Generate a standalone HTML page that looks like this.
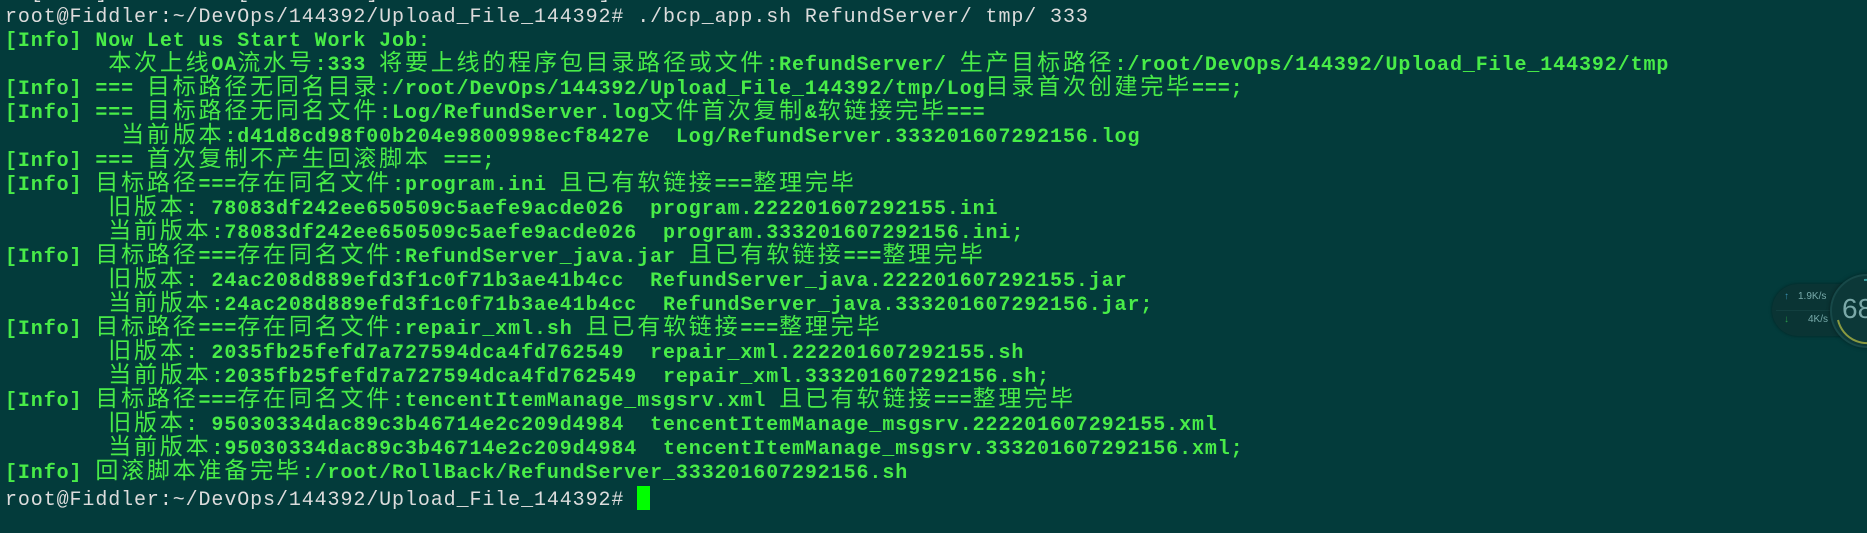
<!DOCTYPE html>
<html><head><meta charset="utf-8"><style>
html,body{margin:0;padding:0;width:1867px;height:533px;overflow:hidden;background:#033b3b;}
pre{position:absolute;left:5px;top:-18px;margin:0;font-family:"Liberation Mono","Noto Sans CJK SC",monospace;font-size:20px;letter-spacing:0.9px;line-height:24px;color:#48ec48;font-weight:bold;white-space:pre;}
.w{color:#dcdcdc;font-weight:normal;}
.c{font-size:23px;letter-spacing:2.8px;font-weight:normal;line-height:0;}
.cur{display:inline-block;width:13px;height:24px;background:#00ff00;vertical-align:-5px;line-height:0;}
.wid{position:absolute;left:1772px;top:284px;width:120px;height:52px;border-radius:26px;background:#0a3434;box-shadow:0 0 3px rgba(0,0,0,.4);}
.circ{position:absolute;left:1830px;top:274px;width:70px;height:70px;border-radius:50%;background:#0c3838;border:2px solid #174848;box-shadow:0 0 4px rgba(0,0,0,.4);}
</style></head><body>
<pre><span class="w">  [ _  ]          [ _       ]                 ]</span>
<span class="w">root@Fiddler:~/DevOps/144392/Upload_File_144392# ./bcp_app.sh RefundServer/ tmp/ 333</span>
[Info] Now Let us Start Work Job:
        <span class="c">本次上线</span>OA<span class="c">流水号</span>:333 <span class="c">将要上线的程序包目录路径或文件</span>:RefundServer/ <span class="c">生产目标路径</span>:/root/DevOps/144392/Upload_File_144392/tmp
[Info] === <span class="c">目标路径无同名目录</span>:/root/DevOps/144392/Upload_File_144392/tmp/Log<span class="c">目录首次创建完毕</span>===;
[Info] === <span class="c">目标路径无同名文件</span>:Log/RefundServer.log<span class="c">文件首次复制</span>&amp;<span class="c">软链接完毕</span>===
         <span class="c">当前版本</span>:d41d8cd98f00b204e9800998ecf8427e  Log/RefundServer.333201607292156.log
[Info] === <span class="c">首次复制不产生回滚脚本</span> ===;
[Info] <span class="c">目标路径</span>===<span class="c">存在同名文件</span>:program.ini <span class="c">且已有软链接</span>===<span class="c">整理完毕</span>
        <span class="c">旧版本</span>: 78083df242ee650509c5aefe9acde026  program.222201607292155.ini
        <span class="c">当前版本</span>:78083df242ee650509c5aefe9acde026  program.333201607292156.ini;
[Info] <span class="c">目标路径</span>===<span class="c">存在同名文件</span>:RefundServer_java.jar <span class="c">且已有软链接</span>===<span class="c">整理完毕</span>
        <span class="c">旧版本</span>: 24ac208d889efd3f1c0f71b3ae41b4cc  RefundServer_java.222201607292155.jar
        <span class="c">当前版本</span>:24ac208d889efd3f1c0f71b3ae41b4cc  RefundServer_java.333201607292156.jar;
[Info] <span class="c">目标路径</span>===<span class="c">存在同名文件</span>:repair_xml.sh <span class="c">且已有软链接</span>===<span class="c">整理完毕</span>
        <span class="c">旧版本</span>: 2035fb25fefd7a727594dca4fd762549  repair_xml.222201607292155.sh
        <span class="c">当前版本</span>:2035fb25fefd7a727594dca4fd762549  repair_xml.333201607292156.sh;
[Info] <span class="c">目标路径</span>===<span class="c">存在同名文件</span>:tencentItemManage_msgsrv.xml <span class="c">且已有软链接</span>===<span class="c">整理完毕</span>
        <span class="c">旧版本</span>: 95030334dac89c3b46714e2c209d4984  tencentItemManage_msgsrv.222201607292155.xml
        <span class="c">当前版本</span>:95030334dac89c3b46714e2c209d4984  tencentItemManage_msgsrv.333201607292156.xml;
[Info] <span class="c">回滚脚本准备完毕</span>:/root/RollBack/RefundServer_333201607292156.sh
<span class="w">root@Fiddler:~/DevOps/144392/Upload_File_144392# </span><span class="cur"></span></pre>
<div class="wid">
  <div style="position:absolute;left:12px;top:7px;font:10px 'Liberation Sans',sans-serif;color:#3a8fb0;">&#8593;</div>
  <div style="position:absolute;left:26px;top:7px;font:10px 'Liberation Sans',sans-serif;color:#7aa;">1.9K/s</div>
  <div style="position:absolute;left:4px;top:26px;width:60px;height:1px;background:#123f3f;"></div>
  <div style="position:absolute;left:12px;top:30px;font:10px 'Liberation Sans',sans-serif;color:#2a9a4a;">&#8595;</div>
  <div style="position:absolute;left:36px;top:30px;font:10px 'Liberation Sans',sans-serif;color:#7aa;">4K/s</div>
</div>
<div class="circ">
  <svg width="70" height="70" style="position:absolute;left:0;top:0"><path d="M6 44 A30 30 0 0 0 52 62" fill="none" stroke="#8a9a40" stroke-width="2"/><path d="M32 4 A30 30 0 0 1 42 5" fill="none" stroke="#3aa0a0" stroke-width="2"/></svg>
  <div style="position:absolute;left:10px;top:17px;font:28px 'Liberation Sans',sans-serif;color:#7aa8a8;">68</div>
</div>
</body></html>
